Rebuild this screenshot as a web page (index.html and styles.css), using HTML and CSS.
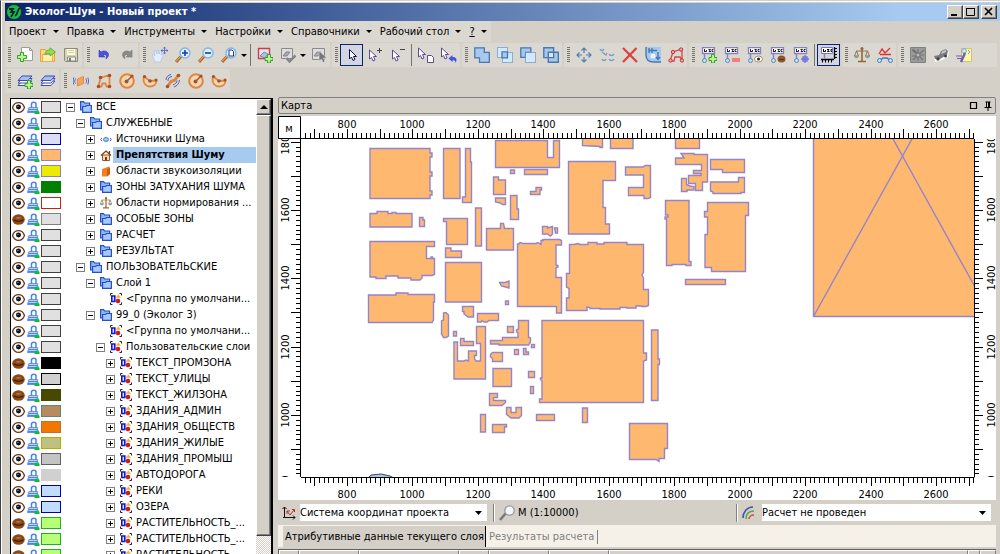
FILE: index.html
```html
<!DOCTYPE html>
<html lang="ru">
<head>
<meta charset="utf-8">
<title>Эколог-Шум</title>
<link rel="stylesheet" href="styles.css">
</head>
<body>
<svg class="defs" aria-hidden="true">
  <symbol id="plus" viewBox="0 0 16 16"><path d="M10.500 7.500h3v3h2.500v3h-2.500v2.500h-3v-2.500h-2.500v-3h2.500z" fill="#b9f58c" stroke="#35a02c"/></symbol>
  <symbol id="new" viewBox="0 0 16 16"><path d="M4.500.5h8l3 3v10h-11z" fill="#fff" stroke="#a09c90"/><path d="M12.500.5v3h3" fill="none" stroke="#a09c90"/><path d="M3.500 5.500h3v3h3v3h-3v3h-3v-3h-3v-3h3z" fill="#b9f58c" stroke="#35a02c"/></symbol>
  <symbol id="open" viewBox="0 0 16 16"><path d="M.5 14.500v-12h5l1 2h8v10z" fill="#ffd77a" stroke="#e8a23c"/><path d="M2.500 14.500v-7h10v7z" fill="#ffeeb5" stroke="#e8b04e"/><path d="M5 8c0-4 2-5 5-5V.8L15.500 5 10 9V6.500C7.500 6.500 6 7 5 8z" fill="#8fe04a" stroke="#5aa82c" stroke-width=".8"/></symbol>
  <symbol id="save" viewBox="0 0 16 16"><path d="M1.500 1.500h13v13h-12l-1-1z" fill="#d6d1bd" stroke="#8d8a7c"/><path d="M4 2h8v6H4z" fill="#fffde0"/><path d="M5 3.500h6M5 5.500h6" stroke="#d8d090"/><path d="M4.500 10h8v4h-8z" fill="#f3f3ef" stroke="#8d8a7c"/><path d="M6 11h2v3H6z" fill="#7a7a72"/></symbol>
  <symbol id="undo" viewBox="0 0 16 16"><path d="M3 3v7h6L7 8c3-1 4 0 3 4 4-3 3-8-2-8-1.500 0-2 .5-3 1z" fill="#4a52e0" stroke="#3038b8" stroke-width=".6"/></symbol>
  <symbol id="redo" viewBox="0 0 16 16"><path d="M13 3v7H7l2-2c-3-1-4 0-3 4-4-3-3-8 2-8 1.500 0 2 .5 3 1z" fill="#8a8a8a" stroke="#777" stroke-width=".6"/></symbol>
  <symbol id="hand" viewBox="0 0 16 16"><path d="M3 15C2 11 0 9 .5 7.500 2 7 2.500 9 3 9L2 4l1.500-.5L5 7V3h1.500L7 7l1.500-3.500L10 4 9 8l2-1c1 1-1 4-2 6v2z" fill="#e3eeff" stroke="#a9bfe8" stroke-width=".7"/><path d="M12.500 0v7M9 3.500h7M11.500 1.500l1-1.500 1 1.500M11.500 5.500l1 1.500 1-1.500M10.500 2.500L9 3.500l1.500 1M14.500 2.500l1.500 1-1.500 1" stroke="#5560c8" fill="none" stroke-width=".8"/></symbol>
  <symbol id="lens" viewBox="0 0 16 16"><path d="M1 15l5.500-6" stroke="#b0692c" stroke-width="3"/><path d="M1 14.500l5.500-6" stroke="#f0b36a"/><circle cx="10" cy="6" r="5" fill="#d9f2ff" stroke="#85b4e2" stroke-width="1.400"/></symbol>
  <symbol id="zin" viewBox="0 0 16 16"><use href="#lens"/><path d="M10 3v6M7 6h6" stroke="#2335b0" stroke-width="1.600"/></symbol>
  <symbol id="zout" viewBox="0 0 16 16"><use href="#lens"/><path d="M7 6h6" stroke="#2335b0" stroke-width="1.600"/></symbol>
  <symbol id="zpage" viewBox="0 0 16 16"><use href="#lens"/><path d="M8 3h3l1.500 1.500V9H8z" fill="#fff" stroke="#2335b0"/></symbol>
  <symbol id="area" viewBox="0 0 16 16"><path d="M1.500 1.500h11v10h-11z" fill="#e6e3ee" stroke="#c6404a" stroke-width="1.400"/><path d="M3 9l4-4 4 2-3 4z" fill="#b5bddc" stroke="#7b86b8"/><use href="#plus"/></symbol>
  <symbol id="areaok" viewBox="0 0 16 16"><path d="M1.500 1.500h11v10h-11z" fill="#dedede" stroke="#8a8a8a"/><path d="M3 9l3-4 4 0-3 4z" fill="#aaa" stroke="#888"/><path d="M6.500 11l3 3.500 6-6" fill="none" stroke="#858585" stroke-width="2.500"/></symbol>
  <symbol id="areasel" viewBox="0 0 16 16"><path d="M1.500 1.500h12v11h-12z" fill="#dedede" stroke="#8a8a8a"/><path d="M3 9l3-4 4 0-3 4z" fill="#aaa" stroke="#888"/><path d="M8 4v10l2.500-2 1.500 3.500 2-1-1.500-3.500H16z" fill="#777" stroke="#ddd" stroke-width=".6"/></symbol>
  <symbol id="cur" viewBox="0 0 16 16"><path d="M5.500 2.500v9.500l2-2 1.500 3.500 2-1L9.500 9.500h3z" fill="#fff" stroke="#10105c"/></symbol>
  <symbol id="curs" viewBox="0 0 16 16"><path d="M2.500 1v9L4.500 8.500l1.500 3.500 2-1L6.500 7.500h3z" fill="#fff" stroke="#5b4a94"/></symbol>
  <symbol id="curp" viewBox="0 0 16 16"><g transform="translate(0 2)"><use href="#curs"/></g><path d="M12.500 1v5M10 3.500h5" stroke="#444"/></symbol>
  <symbol id="curm" viewBox="0 0 16 16"><g transform="translate(0 2)"><use href="#curs"/></g><path d="M10 2.500h5" stroke="#444"/></symbol>
  <symbol id="curd" viewBox="0 0 16 16"><g transform="translate(-2 0)"><use href="#curs"/></g><path d="M9.500 8.500h4l2 2v5h-6z" fill="#fff" stroke="#5b4a94"/></symbol>
  <symbol id="curu" viewBox="0 0 16 16"><g transform="translate(-2 0)"><use href="#curs"/></g><path d="M7.500 11.500l4-3.500v2c4-.5 5 3 3 6 0-2-1-3-3-2.500V15z" fill="#4a52e0"/></symbol>
  <symbol id="uni" viewBox="0 0 16 16"><path d="M.8.8h9.500v4.500h5v10H5.500v-4.500H.8z" fill="#a9c8ea" stroke="#4578b4" stroke-width="1.300"/></symbol>
  <symbol id="int" viewBox="0 0 16 16"><path d="M.5.5h10v10H.5zM5.500 5.500h10v10h-10z" fill="#d3e9fd" stroke="#4578b4" stroke-dasharray="1 1"/><path d="M5 4.800h5.500v6H5z" fill="#a9c8ea" stroke="#4578b4" stroke-width="1.300"/></symbol>
  <symbol id="sub" viewBox="0 0 16 16"><path d="M.8.8h10v4.500H5.500v5H.8z" fill="#a9c8ea" stroke="#4578b4" stroke-width="1.300"/><path d="M5.500 5.500h10v10h-10z" fill="#d3e9fd" stroke="#4578b4" stroke-dasharray="1 1"/></symbol>
  <symbol id="xor" viewBox="0 0 16 16"><path d="M.8.8h9.800v9.800H.8zM5.300 5.300h10v10h-10z" fill="#a9c8ea" stroke="#4578b4" stroke-width="1.400"/><path d="M6 6h4v4H6z" fill="#dfe9f2"/></symbol>
  <symbol id="move" viewBox="0 0 16 16"><path d="M8 1v5M8 10v5M1 8h5M10 8h5M5.500 3.500L8 1l2.500 2.500M5.500 12.500L8 15l2.500-2.500M3.500 5.500L1 8l2.500 2.500M12.500 5.500L15 8l-2.500 2.500" fill="none" stroke="#557fb5" stroke-width="1.200"/></symbol>
  <symbol id="copy" viewBox="0 0 16 16"><g fill="none" stroke="#7a9cc6" stroke-width="1.400"><path d="M1 2c1 2 3 2 4 0M10 7c1 2 4 2 5 0M3 12c1 2 3 2 4 0M10 12c1 2 4 2 5 0M3 5l4 3 1-2"/></g></symbol>
  <symbol id="del" viewBox="0 0 16 16"><path d="M1 1l14 14M14.500 1L1 15" stroke="#dd3e3e" stroke-width="2.200"/></symbol>
  <symbol id="scale" viewBox="0 0 16 16"><path d="M1 0h15v15H9C3 15 1 11 1 8z" fill="#a9c8ea"/><path d="M1 0v8c0 5 3 7 8 7h7M4 1v5M7 1v5M4 3.500h8M13 5v7M11 10l2 2.500 2-2.500" fill="none" stroke="#4578b4" stroke-width="1.400"/><circle cx="8" cy="9" r="2.500" fill="#e8f2fc"/></symbol>
  <symbol id="poly" viewBox="0 0 16 16"><path d="M2 14h4l1-4h5l2 4V2L5 5z" fill="none" stroke="#d64545" stroke-width="1.300"/><g fill="#f5a0a0" stroke="#c93838"><circle cx="2.500" cy="13.500" r="1.700"/><circle cx="5" cy="5" r="1.700"/><circle cx="13" cy="2.500" r="1.700"/><circle cx="14" cy="13.500" r="1.700"/></g></symbol>
  <symbol id="tag" viewBox="0 0 16 16"><path d="M1.500.5h12v6h-12z" fill="#fff" stroke="#8682c0" stroke-width="1.300"/><path d="M3.500 2v3M3.500 4.500h2V3M7.500 2.500h2L8 4.500h2M12.500 2.500H11v2h1.500" fill="none" stroke="#222"/><path d="M3.500 7v6" stroke="#8682c0" stroke-width="1.400"/><circle cx="3.500" cy="13.500" r="2" fill="#bfe0f8" stroke="#5c88b8"/></symbol>
  <symbol id="tagp" viewBox="0 0 16 16"><use href="#tag"/><use href="#plus"/></symbol>
  <symbol id="tagm" viewBox="0 0 16 16"><use href="#tag"/><path d="M8 11h8v4H8z" fill="#f08080"/></symbol>
  <symbol id="tage" viewBox="0 0 16 16"><use href="#tag"/><ellipse cx="11.500" cy="12" rx="4" ry="3" fill="#fff" stroke="#a59270"/><circle cx="11.500" cy="12" r="1.500" fill="#222"/></symbol>
  <symbol id="tagb" viewBox="0 0 16 16"><use href="#tag"/><ellipse cx="11.500" cy="12" rx="4" ry="3.500" fill="#91562c"/><path d="M9 12.500h5" stroke="#5c3010"/></symbol>
  <symbol id="tagv" viewBox="0 0 16 16"><use href="#tag"/><path d="M12 8v8M8 12h8M10 10h4v4h-4z" fill="none" stroke="#7070e0" stroke-width="1.300"/></symbol>
  <symbol id="tagr" viewBox="0 0 16 16"><path d="M.5.5h11v6H.5z" fill="#fff" stroke="#777ac0"/><path d="M2.500 2v3M2.500 4.500h2V3M6 2.500h2L6.500 4.500h2M11 2.500h-1v2h1" fill="none" stroke="#000"/><path d="M3.500 7v4" stroke="#8682c0" stroke-width="1.500"/><path d="M13.500 0v12M0 12.500h13" stroke="#000" stroke-width="1.300"/><path d="M14 1.500h2M14 4.500h2M14 7.500h2M14 10.500h2M1.500 13v2.500M4.500 13v2.500M7.500 13v2.500M10.500 13v2.500" stroke="#000"/></symbol>
  <symbol id="bal" viewBox="0 0 16 16"><path d="M8 1v13M4 14.500h8" stroke="#9a6430" stroke-width="1.600"/><circle cx="8" cy="1.500" r="1.500" fill="#9a6430"/><path d="M2 4h12M2.500 4L.5 9h4zM13.500 4l-2 5h4z" fill="none" stroke="#8c6c4c" stroke-width=".9"/><path d="M0 9h5c-1 3-4 3-5 0zM11 9h5c-1 3-4 3-5 0z" fill="#7aa490"/></symbol>
  <symbol id="graph" viewBox="0 0 16 16"><path d="M2 7l3-5 3 4 5-5M3 7.500h11" fill="none" stroke="#d33" stroke-width="1.300"/><path d="M2.500 14L6 11h4l3.500 3" fill="none" stroke="#4578b4" stroke-width="1.400"/><circle cx="2.500" cy="13.500" r="2" fill="#c6e4f8" stroke="#4578b4"/><circle cx="13.500" cy="13.500" r="2" fill="#c6e4f8" stroke="#4578b4"/></symbol>
  <symbol id="fan" viewBox="0 0 16 16"><path d="M.5.5h15v15H.5z" fill="#9c9c9c" stroke="#808080"/><path d="M2 3l5 4M3 2l5 5M14 3L9 7M13 13l-4-4M3 13l4-4M8 2v4M2 9h4M10 8h4M8 10v4" stroke="#747474" stroke-width="1.200"/><circle cx="8" cy="8" r="2" fill="#bbb" stroke="#777"/></symbol>
  <symbol id="car" viewBox="0 0 16 16"><path d="M1 10l5-2 2-4 6-2 2 3-1 5-8 4-5 1z" fill="#fff"/><path d="M1 9l5-1 2-4 5-2 2 2-1 4-7 4H2z" fill="#7b7b7b"/><path d="M8 7l1-2.500 4-1.500v2z" fill="#ccc"/><circle cx="5" cy="12" r="1.700" fill="#444"/><circle cx="12.500" cy="9" r="1.500" fill="#444"/></symbol>
  <symbol id="note" viewBox="0 0 16 16"><path d="M5.500 1.500h10v13h-10z" fill="#fdf7a8" stroke="#cfc66a"/><circle cx="8" cy="4" r="2.300" fill="#cfe8fa" stroke="#7aa4cc"/><path d="M12 3c2 1 2 3 0 4" fill="none" stroke="#6aa4dc"/><path d="M0 9h6M1 11.500h5" stroke="#7058c0" stroke-width="1.200"/><path d="M9 6l-4 9" stroke="#7058c0" stroke-width="2.400"/></symbol>
  <symbol id="lay" viewBox="0 0 16 16"><path d="M1 12.500L5 8h10l-4 4.500z" fill="#fff" stroke="#3f4cae"/><path d="M1 10L5 5.500h10L11 10z" fill="#fff" stroke="#3f4cae"/><path d="M1 7.500L5 3h10l-4 4.500z" fill="#a9bdf0" stroke="#3f4cae"/></symbol>
  <symbol id="layp" viewBox="0 0 16 16"><use href="#lay"/><use href="#plus"/></symbol>
  <symbol id="noise" viewBox="0 0 16 16"><path d="M4.500 6c2-.5 4-2 6-2.500v7c-2 .5-4 2-6 2.500z" fill="#f4a460" stroke="#e38a3c"/><path d="M2.500 5.500c-1 2-1 3.500 0 5M.8 4.500c-1 3-1 4 0 7M12.800 5.500c1 2 1 3.500 0 5M14.800 4.500c1 3 1 4 0 7" fill="none" stroke="#5660c8"/></symbol>
  <symbol id="pg" viewBox="0 0 16 16"><path d="M2.500 13.500l2-8.500 9-3v11.500h-3l-1-3h-3l-1 3z" fill="none" stroke="#e08642" stroke-width="1.800"/><g fill="#a6522a"><circle cx="2.500" cy="13.500" r="1.800"/><circle cx="4.500" cy="4.500" r="1.800"/><circle cx="13.500" cy="2.500" r="1.800"/><circle cx="13.500" cy="13.500" r="1.800"/></g></symbol>
  <symbol id="ci" viewBox="0 0 16 16"><circle cx="8" cy="8" r="6.800" fill="#f0d8b4" stroke="#e08642" stroke-width="2"/><path d="M8 8l5-5" stroke="#a6522a" stroke-width="1.500"/><circle cx="7.500" cy="8.500" r="2" fill="#a6522a"/><circle cx="13" cy="3" r="1.600" fill="#a6522a"/></symbol>
  <symbol id="ar" viewBox="0 0 16 16"><path d="M2 3.500L8 8l6.500-.5c0 4-3 6-6.500 6S0 10 2 3.500z" fill="#f0d8b4" stroke="#e08642" stroke-width="1.800"/><circle cx="2.500" cy="3.500" r="1.600" fill="#a6522a"/><circle cx="8" cy="8" r="1.800" fill="#a6522a"/><circle cx="14" cy="7" r="1.500" fill="#a6522a"/></symbol>
  <symbol id="rd" viewBox="0 0 16 16"><path d="M2.500 13.500L6 8.500 10 7l3.500-5" fill="none" stroke="#e08642" stroke-width="3"/><circle cx="2.500" cy="13.500" r="1.800" fill="#a6522a"/><circle cx="13.500" cy="2.500" r="1.800" fill="#a6522a"/><path d="M1 7c0-3 2-5 5-5.500M3 8c0-3 1-4 4-4.500M9 14c3-1 5-3 5.500-7M8 12c2-1 4-2 4-4.500" fill="none" stroke="#5660c8"/></symbol>
  <symbol id="eye" viewBox="0 0 12 12"><path d="M.5 6C1.500 3 4 1.500 6 1.500S10.500 3 11.500 6C10.500 9 8 10.500 6 10.500S1.500 9 .5 6z" fill="#fff" stroke="#6b3c22" stroke-width="1.200"/><circle cx="6" cy="5.500" r="2.300" fill="#111"/><circle cx="5.500" cy="5" r=".7" fill="#999"/></symbol>
  <symbol id="shut" viewBox="0 0 12 12"><ellipse cx="6" cy="6" rx="5.800" ry="4.800" fill="#8a4a18"/><path d="M1.500 6.500c3 1.500 6 1.500 9 0" stroke="#3c1c06" fill="none"/><path d="M4 4.500h4" stroke="#c88448"/></symbol>
  <symbol id="lock" viewBox="0 0 13 13"><path d="M4.500 6.500V3c0-2.500 4.500-2.500 4.500 0v3" fill="none" stroke="#4a80e8" stroke-width="1.500"/><path d="M2 6.500h8.500l.5 5H.5z" fill="#bcd6ff" stroke="#5a90f0"/><path d="M1.500 8.500h9M1 10.500h9" stroke="#4a80e8"/><path d="M7.500 10.500c2-2 4.500-.5 5 .5v2h-5z" fill="#12b83a"/></symbol>
  <symbol id="fold" viewBox="0 0 12 12"><path d="M.6 9V.6h3l1 1.400h5v7z" fill="#8db4fa" stroke="#2450c8" stroke-width="1.200"/><path d="M2.600 11.400V5.500h3l1-1h4.800v6.900z" fill="#a9c8ff" stroke="#2450c8" stroke-width="1.200"/></symbol>
  <symbol id="src" viewBox="0 0 12 12"><ellipse cx="6" cy="6.500" rx="2.500" ry="2" fill="#9cc8f4" stroke="#4a86cc"/><path d="M2 5L.7 6.500 2 8M10 5l1.300 1.500L10 8" fill="none" stroke="#3c54c0"/></symbol>
  <symbol id="house" viewBox="0 0 12 12"><path d="M2.500 6h7v5.500h-7z" fill="#ffd9ad" stroke="#8a5a34"/><path d="M1 6.500L6 2l5 4.500M9.500 2v3" fill="none" stroke="#7c3c1c" stroke-width="1.300"/><path d="M5 8h2v3.500H5z" fill="#7c3c1c"/></symbol>
  <symbol id="box" viewBox="0 0 12 12"><path d="M2 4l7-2.500 1 1V9l-3 2.500H2z" fill="#f08226"/><path d="M7 4.500L10 2.500V9l-3 2.500z" fill="#c85e10"/></symbol>
  <symbol id="grp" viewBox="0 0 12 12"><path d="M.5 2.500v-2h2M9.500.5h2v2M11.500 9.500v2h-2M2.500 11.500h-2v-2" fill="none" stroke="#222"/><path d="M1.800 3h3v5.500h-3z" fill="#e8e8ff" stroke="#1414e0" stroke-width="1.600"/><path d="M5.500 4.800h5.500L8.300 1.500z" fill="#f0b420"/><circle cx="8" cy="8" r="2.300" fill="#e01414"/></symbol>
</svg>

<div class="window">
  <header class="title">
    <svg class="logo" viewBox="0 0 16 16"><circle cx="8" cy="8" r="7.500" fill="#1fb457" stroke="#0c3a24"/><path d="M3 5h4L5 8h3l-3 5M9 12c3-1 2-7 5-8" fill="none" stroke="#0a2c20" stroke-width="1.800"/></svg>
    <h1>Эколог-Шум - Новый проект *</h1>
    <div class="winbtns">
      <button aria-label="Свернуть"><svg viewBox="0 0 12 10"><path d="M2 8h6" stroke="#000" stroke-width="2"/></svg></button>
      <button aria-label="Развернуть"><svg viewBox="0 0 12 10"><path d="M1.500 1.500h8v7h-8zM1 1.500h9" fill="none" stroke="#000"/></svg></button>
      <button aria-label="Закрыть"><svg viewBox="0 0 12 10"><path d="M2 1l7 7M9 1L2 8" stroke="#000" stroke-width="1.600"/></svg></button>
    </div>
  </header>

  <nav class="menu">
    <button>Проект<i></i></button><button>Правка<i></i></button><button>Инструменты<i></i></button><button>Настройки<i></i></button><button>Справочники<i></i></button><button>Рабочий стол<i></i></button><button><u>?</u><i></i></button>
  </nav>

  <div class="bars">
    <div class="bar" data-icons="new open save"></div>
    <div class="bar" data-icons="undo redo"></div>
    <div class="bar" data-icons="hand zin zout zpage v | area areaok v areasel"></div>
    <div class="bar" data-icons="*cur curp curm | curd curu"></div>
    <div class="bar" data-icons="uni int sub xor"></div>
    <div class="bar" data-icons="move copy del scale poly"></div>
    <div class="bar" data-icons="tagp tagm tage tagb tagv | *tagr"></div>
    <div class="bar" data-icons="bal graph"></div>
    <div class="bar grow" data-icons="fan car note"></div>
  </div>
  <div class="bars">
    <div class="bar" data-icons="layp lay"></div>
    <div class="bar" data-icons="noise pg ci ar rd ci ar"></div>
  </div>

  <div class="work">
    <aside class="treebox">
      <ul class="tree" id="tree"></ul>
      <div class="scroll"><button class="up" aria-label="Вверх"></button><div class="thumb"></div></div>
    </aside>

    <main class="right">
      <div class="caption"><h2>Карта</h2>
        <svg viewBox="0 0 24 10"><path d="M1.500 1.500h6v6h-6z" fill="none" stroke="#000" stroke-width="1.200"/><path d="M16.500 1h5M17.500 1v5M20.500 1v5M19.500 1v5M15.500 6.500h7M19 7v3" stroke="#000" fill="none"/></svg>
      </div>
      <svg class="map" viewBox="278 116 718 384">
        <defs>
          <clipPath id="view"><path d="M301 139h673v338H301z"/></clipPath>
          <clipPath id="sides"><path d="M278 139h718v338H278z"/></clipPath>
        </defs>
        <path d="M278 116h718v384H278z" fill="#fff"/>
        <g clip-path="url(#view)">
          <g class="building">
            <path d="M370 148.500H430V153H432V157H430V172H432V176H430V191H432V195H430V198.500H370Z"/>
            <path d="M443.500 148.500H460V198.500H443.500Z"/>
            <path d="M465.500 148.500H470.500V162H471.500V202.500H462.500V197H465.500Z"/>
            <path d="M495.500 140.500H547.500V157.500H553.500V140.500H559.500V167.500H495.500Z"/>
            <path d="M510.500 170h4v3.500h-4zM524.500 169.500h23v5h-23z"/>
            <path d="M493.500 177H498.500V180H505.500V194.500H493.500Z"/>
            <path d="M495.500 198H505.500V204.500H502.500L500.500 203 495.500 202Z"/>
            <path d="M510.500 195.500H517V209H518.500V219.500H510.500Z"/>
            <path d="M530.500 191.500H536V187.500H541.500V190H540V194.500H530.500Z"/>
            <path d="M582.500 136V145.500L600 146.500V147.500H602.500V136Z"/>
            <path d="M610.500 136V148.500H633V136ZM675.500 136V148.500H699.500V136Z"/>
            <path d="M568.500 161.500H615.500V180.500H603V207.500H605.500V224H609.500V234H568.500Z"/>
            <path d="M370 213.500H377V211.500H388V213.500H392V212.500H396V213.500H412V227H370Z"/>
            <path d="M419.500 217.500H423V220H424.500V226.500H419.500Z"/>
            <path d="M443.500 218.500H467.500V244.500H446.500V221.500H443.500Z"/>
            <path d="M475.500 208h6v38h-6zM445.500 262.500h36v39.500h-36z"/>
            <path d="M445.500 248H451V251H461.500V257.500H445.500Z"/>
            <path d="M486.500 228.500H500.500V223.500H503.500L504.500 228.500H513.500V250H486.500Z"/>
            <path d="M370 241.500H434.500V246.500H426.500V258.500H431V257H432.500V258.500H434.500V274.500L432 275.500H422V278L420 280H411V278H398V276H386V278.500H376V277H370Z"/>
            <path d="M368.500 295H396V293H408V294.500H434.500V302H433.500V320L432 322.500H368.500Z"/>
            <path d="M517.500 244H519L520 242.500 523 243.500H536L538 242.500 541 244.500V240.500H543V239.500H559.500L561.500 240.500V245H556V265L558 265.500V267L556 268V277.500H561.500V313H556.500V306.500H517.500Z"/>
            <path d="M542.500 226.500H547.500V228L552.500 226.500V234L550.500 236 547.500 234H542.500ZM554.500 228H557.500V233H555.500Z"/>
            <path d="M499.500 282.500H505L509 281V288L504 286.500 501.500 286ZM505.500 301h3v3.500h-3z"/>
            <path d="M569.500 244.500H574L578 243.500 580 244.500H588V242.500H597V244H604V242.500H627V244.500H643.500V272.500L642 275 643.500 278V289.500H648.500V305.500L646 306.500H642V306H636V308H627V307.500H620V309H600V308.500H590V307.500L587 307V310.500H566.500V298H569V288.500L566.500 287V273.500H569.500Z"/>
            <path d="M625.500 167H643L645 165.500H650.500V197.500L648 198.500H644V195.500H628.500V187.500H643.500V175H625.500Z"/>
            <path d="M675.500 158H684L681 153.500H694V154.500H707.500V182H702.500V190.500H695.500V183.500H688.500V175.500H701V173.500H693.500V170.500H701.500V164.500H675.500Z"/>
            <path d="M681.500 178.500H686.500V184.500L690 186 694 186.500V190H687V191.500H681.500Z"/>
            <path d="M710.500 159.500H744.500V172.500H722.500V169.500H710.500Z"/>
            <path d="M710.500 182H738.500V177.500H744.500V192.500H741V193.500H713V192L710.500 191Z"/>
            <path d="M665.500 200.500H689V261.500H691V265.500H686V264.500H672V265.500H666.500V219H665V217H668V215H665.500Z"/>
            <path d="M707.500 202.500H748.500V215.500H745.500V271.500H711.500V267.500H705V234.500H707.500V217H704.500V211.500H707.500Z"/>
            <path d="M685.500 279.500h40v5h-40z"/>
            <path d="M462.500 306.500H473.500V317H468L464 314V311.500H462.500Z"/>
            <path d="M477.500 313.500H498.500V320.500H489L487 322H484L482 320.500 481 322H477.500Z"/>
            <path d="M443.500 313L446 312.500 448.500 315V336L446 337.500H443.500L441.500 334V321L443.500 320Z"/>
            <path d="M453.500 331.500h3v4.500h-3zM460.500 338.500H464V341.500H473.500V345.500H460.500Z"/>
            <path d="M454 342H457.500V361H464L466 360 468.500 361V351H476.500V355.500H474.500V358.500L476 361H480.500V343.500H476.500V326.500H485.500V379H454Z"/>
            <path d="M507.500 326.500h6v6h-6zM531.500 344.500h3v3h-3zM514.500 349.500h4v5h-4z"/>
            <path d="M490.500 340.500H502.500V337.500H518V333L516.500 332V330L518.500 329V320.500H528.500V337L530.500 338V342L528.500 345H499V344H490.500Z"/>
            <path d="M523.500 348.500H526V352H528.500V354.500H523.500ZM492.500 352.500H502.500V361.500H492.500V358.500L490.500 357V354.500Z"/>
            <path d="M493 368.500h18.500v18H493zM528.500 371.500h6v6h-6zM530.500 386.500h3v7h-3z"/>
            <path d="M489.500 393.500H497.500V397.500H493.500V400.500H505.500V402.500L502 405.500H489.500Z"/>
            <path d="M506.500 407.500H511V412.500H516V407.500H521.500V415.500L519 418H511L506.500 414.500Z"/>
            <path d="M480.500 414.500h5v17.500h-5zM492.500 424.500H506.500V427H504.500V432.500H492.500ZM536.500 414.500h18v6h-18zM582.500 408h5v14.500h-5z"/>
            <path d="M651.500 330H658V359H659.500V364.500H658V400.500H651.500Z"/>
            <path d="M542 320.500H643.500V353H646.500V360L643.500 361V402.500H539.500V399H542V381L540.500 379.500V378H542Z"/>
            <path d="M629.500 423.500H667.500V448.500H664.500V458.500H659V461.500L656 459.500H629.500Z"/>
            <path d="M813.500 130H980V316.500H813.500ZM813.500 316.500L912 139M893 139L980 296"/>
          </g>
          <path d="M368 478l3-3 10-1 9 2 4 2z" fill="#a8c8e8" stroke="#445"/>
        </g>
        <path d="M300.500 139V477M278 138.500H974M974.500 139V477.500M301 477.500H974" stroke="#000" fill="none"/>
        <path d="M278.500 116.500h22v22h-22z" fill="#fff" stroke="#000"/>
        <text x="289" y="132" text-anchor="middle">м</text>
        <path id="ticks" stroke="#000" shape-rendering="crispEdges"/>
        <g id="xlabels" text-anchor="middle"></g>
        <g id="ylabels" text-anchor="middle" clip-path="url(#sides)"></g>
      </svg>

      <div class="status">
        <svg class="ic14" viewBox="0 0 14 14"><path d="M2.500 12V1M.5 3l2-2 2 2M1 11.500h12M11 9.500l2 2-2 2" fill="none" stroke="#111"/><path d="M5 5l3 4 4-5M10 3.500h2.500V6M5 8V5h3" fill="none" stroke="#b03030"/></svg>
        <select class="coords" aria-label="Система координат"><option>Система координат проекта</option></select>
        <span class="div"></span>
        <svg class="ic16" viewBox="0 0 16 16"><path d="M1 15l6-7" stroke="#777" stroke-width="2.500"/><circle cx="10.500" cy="5.500" r="4.700" fill="#f2f6fa" stroke="#9a9a9a" stroke-width="1.300"/></svg>
        <span class="zoom">М (1:10000)</span>
        <span class="div"></span>
        <svg class="ic14" viewBox="0 0 14 14"><path d="M1 12C1 6 5 1 11 1" fill="none" stroke="#4450b0" stroke-width="1.600"/><path d="M4 13c0-5 3-8 8-8" fill="none" stroke="#4cae4c" stroke-width="1.600"/><path d="M7 13c0-2 2-4 5-4" fill="none" stroke="#d44" stroke-width="1.600"/></svg>
        <select class="calc" aria-label="Расчет"><option>Расчет не проведен</option></select>
      </div>

      <div class="tabs"><button class="on">Атрибутивные данные текущего слоя</button><button>Результаты расчета</button></div>
      <table class="grid"><thead><tr><th class="w20"></th><th class="w60"></th><th class="w100"></th><th class="w30"></th><th class="w60"></th><th class="w60"></th><th></th><th class="w12"></th><th class="w16"></th></tr></thead></table>
    </main>
  </div>
</div>
<script src="app.js"></script>
</body>
</html>
```
FILE: styles.css
```css
* { box-sizing: border-box; }
body { margin: 0; background: #d4d0c8; color: #000; font: 11px/16px "DejaVu Sans Condensed", "DejaVu Sans", sans-serif; }
button, select { font: inherit; color: inherit; border: 0; padding: 0; margin: 0; background: none; border-radius: 0; }
h1, h2 { margin: 0; font-size: 11px; }
.defs { display: none; }
.window { display: flex; flex-direction: column; height: 100vh; overflow: hidden; border-left: 1px solid #404040; border-top: 1px solid #d4d0c8; box-shadow: inset 1px 1px #fff; padding: 2px 0 0 4px; }

.title { display: flex; align-items: center; flex: none; height: 18px; gap: 3px; padding: 0 3px 0 1px; background: linear-gradient(90deg, #0a246a, #a6caf0 90%); color: #fff; }
.logo { width: 16px; height: 16px; }
.title h1 { flex: 1; white-space: nowrap; }
.winbtns { display: flex; }
.winbtns button { width: 16px; height: 14px; background: #d4d0c8; border: 1px solid; border-color: #fff #404040 #404040 #fff; box-shadow: inset -1px -1px #808080; }
.winbtns button:last-child { margin-left: 2px; }
.winbtns svg { display: block; width: 12px; height: 10px; margin-left: 1px; }

.menu { display: flex; flex: none; align-self: flex-start; height: 21px; padding: 0 4px; gap: 8px; background: #dbd8d1; }
.menu button { display: flex; align-items: center; gap: 6px; white-space: nowrap; }
.menu i, .drop { border: 3px solid transparent; border-top: 3px solid #000; border-bottom: 0; width: 0; height: 0; }

.bars { display: flex; flex: none; gap: 2px; height: 24px; margin-top: 1px; padding-right: 3px; }
.bars + .bars { margin-top: 2px; }
.bar { display: flex; align-items: center; background: #dbd8d1; border-radius: 2px; }
.bar.grow { flex: 1; }
.bar::before { content: ""; width: 3px; height: 16px; margin: 0 2px 0 3px; background: repeating-linear-gradient(#77746c 0 1px, transparent 1px 2px); }
.bar button { display: grid; place-items: center; width: 23px; height: 22px; }
.bar button svg { width: 16px; height: 16px; }
.bar button.drop-btn { width: 8px; }
.bar button.pressed { background: #d4d5e2; border: 1px solid #0a246a; }
.sep { width: 1px; height: 22px; margin: 0 2px; background: #77746c; }

.work { display: flex; flex: 1; min-height: 0; gap: 5px; padding: 4px 4px 0 5px; }
.treebox { display: flex; flex: none; width: 263px; margin-top: 1px; background: #fff; border: solid #000; border-width: 1px 2px 0 1px; overflow: hidden; }
.tree { flex: 1; min-width: 0; margin: 0; padding: 0 0 0 1px; list-style: none; overflow: hidden; }
.tree li { display: flex; align-items: center; height: 16px; white-space: nowrap; }
.tree .eye, .tree .lk { flex: none; width: 14px; height: 14px; }
.tree .lk { margin-left: 1px; }
.tree button svg { display: block; width: 13px; height: 13px; }
.swatch { flex: none; width: 20px; height: 12px; border: 1px solid #404040; background: #e0e0e0; }
.pad { flex: none; width: 5px; }
.exp { flex: none; width: 9px; height: 9px; border: 1px solid #808080; background: linear-gradient(#000, #000) center / 5px 1px no-repeat #fff; }
.exp.plus { background: linear-gradient(#000, #000) center / 5px 1px no-repeat, linear-gradient(#000, #000) center / 1px 5px no-repeat, #fff; }
.exp.none { visibility: hidden; }
.kind { flex: none; width: 12px; height: 12px; margin: 0 1px 0 5px; }
.label { flex: 1; padding-left: 3px; }
.sel .label { background: #a6caf0; font-weight: bold; }
.scroll { flex: none; display: flex; flex-direction: column; width: 15px; padding-bottom: 18px; background: repeating-conic-gradient(#fff 0 25%, #d4d0c8 0 50%) 0 0 / 2px 2px; }
.up { flex: none; height: 16px; display: grid; place-items: center; background: #d4d0c8; border: 1px solid; border-color: #fff #404040 #404040 #fff; box-shadow: inset -1px -1px #808080; }
.up::before { content: ""; border: 4px solid transparent; border-top: 0; border-bottom-color: #000; }
.thumb { flex: 1; background: #d4d0c8; border: 1px solid; border-color: #fff #404040 #404040 #fff; box-shadow: inset -1px -1px #808080; }

.right { flex: 1; min-width: 0; display: flex; flex-direction: column; }
.caption { display: flex; flex: none; align-items: center; justify-content: space-between; height: 17px; margin-bottom: 2px; padding: 0 2px; border: 1px solid #808080; border-radius: 2px; }
.caption h2 { font-weight: normal; }
.caption svg { width: 24px; height: 10px; }
.map { display: block; flex: none; width: 100%; height: auto; font-size: 11px; }
.building path { fill: #ffb870; stroke: #9484c8; stroke-width: 1.4; }

.status { display: flex; flex: none; align-items: center; height: 25px; padding: 0 5px 0 4px; }
.ic14 { flex: none; width: 14px; height: 14px; }
.ic16 { flex: none; width: 16px; height: 16px; }
.status select { appearance: none; height: 17px; background: url("data:image/svg+xml,%3Csvg xmlns='http://www.w3.org/2000/svg' width='7' height='4'%3E%3Cpath d='M0 0h7L3.500 4z'/%3E%3C/svg%3E") right 5px center no-repeat #fff; }
.status .coords { width: 187px; margin-left: 4px; }
.status .calc { flex: 1; min-width: 0; margin-left: 6px; }
.div { flex: none; width: 2px; height: 18px; margin: 0 4px 0 6px; border-left: 1px solid #808080; border-right: 1px solid #fff; }
.zoom { flex: none; width: 215px; padding-left: 3px; }

.tabs { display: flex; flex: none; height: 22px; padding: 1px 0 0 5px; background: #f5f1e9; }
.tabs button { padding: 0 4px 0 3px; color: #808080; white-space: nowrap; }
.tabs button.on { padding: 0 1px 0 2px; background: #d4d0c8; color: #000; border-right: 1px solid #000; }
.tabs button:last-child { position: relative; }
.tabs button:last-child::after { content: ""; position: absolute; right: 0; top: 4px; height: 14px; border-right: 1px solid #808080; }
.grid { flex: none; width: 100%; margin-top: 2px; table-layout: fixed; border-collapse: separate; border-spacing: 0; border-top: 1px solid #606060; border-left: 1px solid #606060; }
.grid th { height: 16px; padding: 0; border: 1px solid; border-color: #fff #808080 #808080 #fff; }
.w12 { width: 12px; }
.w16 { width: 16px; }
.w20 { width: 20px; }
.w30 { width: 30px; }
.w60 { width: 60px; }
.w100 { width: 100px; }
```
FILE: app.js
```js
const icon = (id, cls = "") => `<svg class="${cls}"><use href="#${id}"/></svg>`;

document.querySelectorAll(".bar").forEach((bar) => {
  bar.innerHTML = bar.dataset.icons.split(" ").map((name) => {
    if (name === "|") return '<span class="sep"></span>';
    if (name === "v") return '<button class="drop-btn" aria-label="Список"><i class="drop"></i></button>';
    const on = name[0] === "*";
    const id = on ? name.slice(1) : name;
    return `<button class="${on ? "pressed" : ""}" aria-label="${id}">${icon(id)}</button>`;
  }).join("");
});

// visible, fill, border, level, expander, kind, label
const rows = [
  [1, "#e0e0e0", "#404040", 0, "-", "fold", "ВСЕ"],
  [1, "#e0e0e0", "#404040", 1, "-", "fold", "СЛУЖЕБНЫЕ"],
  [1, "#dcdcf4", "#0000c0", 2, "+", "src", "Источники Шума"],
  [1, "#ffb870", "#9080c8", 2, "+", "house", "Препятствия Шуму"],
  [1, "#ecec00", "#9080c8", 2, "+", "box", "Области звукоизоляции"],
  [1, "#008000", "#008000", 2, "+", "fold", "ЗОНЫ ЗАТУХАНИЯ ШУМА"],
  [1, "#ffffff", "#d02010", 2, "+", "bal", "Области нормирования ..."],
  [0, "#e0e0e0", "#808080", 2, "+", "fold", "ОСОБЫЕ ЗОНЫ"],
  [1, "#e0e0e0", "#404040", 2, "+", "fold", "РАСЧЕТ"],
  [1, "#e0e0e0", "#404040", 2, "+", "fold", "РЕЗУЛЬТАТ"],
  [1, "#e0e0e0", "#404040", 1, "-", "fold", "ПОЛЬЗОВАТЕЛЬСКИЕ"],
  [1, "#e0e0e0", "#404040", 2, "-", "fold", "Слой 1"],
  [1, "#e0e0e0", "#404040", 3, "", "grp", "<Группа по умолчани..."],
  [1, "#e0e0e0", "#404040", 2, "-", "fold", "99_0 (Эколог 3)"],
  [1, "#e0e0e0", "#404040", 3, "", "grp", "<Группа по умолчани..."],
  [1, "#e0e0e0", "#404040", 3, "-", "grp", "Пользовательские слои"],
  [0, "#000000", "#000000", 4, "+", "grp", "ТЕКСТ_ПРОМЗОНА"],
  [0, "#d0d0d0", "#000000", 4, "+", "grp", "ТЕКСТ_УЛИЦЫ"],
  [0, "#484800", "#484800", 4, "+", "grp", "ТЕКСТ_ЖИЛЗОНА"],
  [1, "#b88a60", "#608878", 4, "+", "grp", "ЗДАНИЯ_АДМИН"],
  [1, "#f07800", "#c07030", 4, "+", "grp", "ЗДАНИЯ_ОБЩЕСТВ"],
  [1, "#c0c080", "#b0b000", 4, "+", "grp", "ЗДАНИЯ_ЖИЛЫЕ"],
  [1, "#c4c4c4", "#606060", 4, "+", "grp", "ЗДАНИЯ_ПРОМЫШ"],
  [1, "#d0d0d0", "#d0d0d0", 4, "+", "grp", "АВТОДОРОГА"],
  [1, "#c0dcff", "#0000b0", 4, "+", "grp", "РЕКИ"],
  [1, "#c0dcff", "#0000b0", 4, "+", "grp", "ОЗЕРА"],
  [0, "#b8ff78", "#20b020", 4, "+", "grp", "РАСТИТЕЛЬНОСТЬ_..."],
  [0, "#b8ff78", "#20b020", 4, "+", "grp", "РАСТИТЕЛЬНОСТЬ_..."],
  [0, "#b8ff78", "#20b020", 4, "+", "grp", "РАСТИТЕЛЬНОСТЬ_..."],
];
document.getElementById("tree").innerHTML = rows.map(([vis, fill, edge, level, exp, kind, label]) => `
  <li class="${kind === "house" ? "sel" : ""}">
    <button class="eye" aria-label="Видимость">${icon(vis ? "eye" : "shut")}</button>
    <button class="lk" aria-label="Блокировка">${icon("lock")}</button>
    <span class="swatch" style="background:${fill};border-color:${edge}"></span>
    <span class="pad" style="width:${5 + level * 10}px"></span>
    <span class="exp ${exp === "+" ? "plus" : exp ? "" : "none"}"></span>
    ${icon(kind, "kind")}
    <span class="label">${label.replace("<", "&lt;")}</span>
  </li>`).join("");

// Rulers: seven short divisions between two long ones, a label on every second long one
const X800 = 347, Y1800 = 141.7, DX = 32.72, DY = 34.15;
let d = "";
for (let i = -10; i <= 134; i++) {
  const x = Math.round(X800 + (i * DX) / 7);
  if (x < 302 || x > 973) continue;
  const major = i % 7 === 0;
  d += `M${x + 0.5} 139V${major ? 129 : 133}M${x + 0.5} 478V${major ? 486 : 483}`;
}
for (let i = 0; i <= 68; i++) {
  const y = Math.round(Y1800 + (i * DY) / 7);
  if (y > 476) continue;
  const major = i % 7 === 0;
  d += `M301 ${y + 0.5}H${major ? 291 : 296}M975 ${y + 0.5}H${major ? 983 : 979}`;
}
document.getElementById("ticks").setAttribute("d", d);

let xl = "", yl = "";
for (let v = 800; v <= 2600; v += 200) {
  const x = Math.round(X800 + ((v - 800) / 100) * DX);
  xl += `<text x="${x}" y="128">${v}</text><text x="${x}" y="498">${v}</text>`;
}
for (let v = 1800; v >= 800; v -= 200) {
  const y = Math.round(Y1800 + ((1800 - v) / 100) * DY) + (v === 800 ? 2 : 0);
  yl += `<text transform="translate(289 ${y}) rotate(-90)">${v}</text><text transform="translate(995 ${y}) rotate(-90)">${v}</text>`;
}
document.getElementById("xlabels").innerHTML = xl;
document.getElementById("ylabels").innerHTML = yl;
```
